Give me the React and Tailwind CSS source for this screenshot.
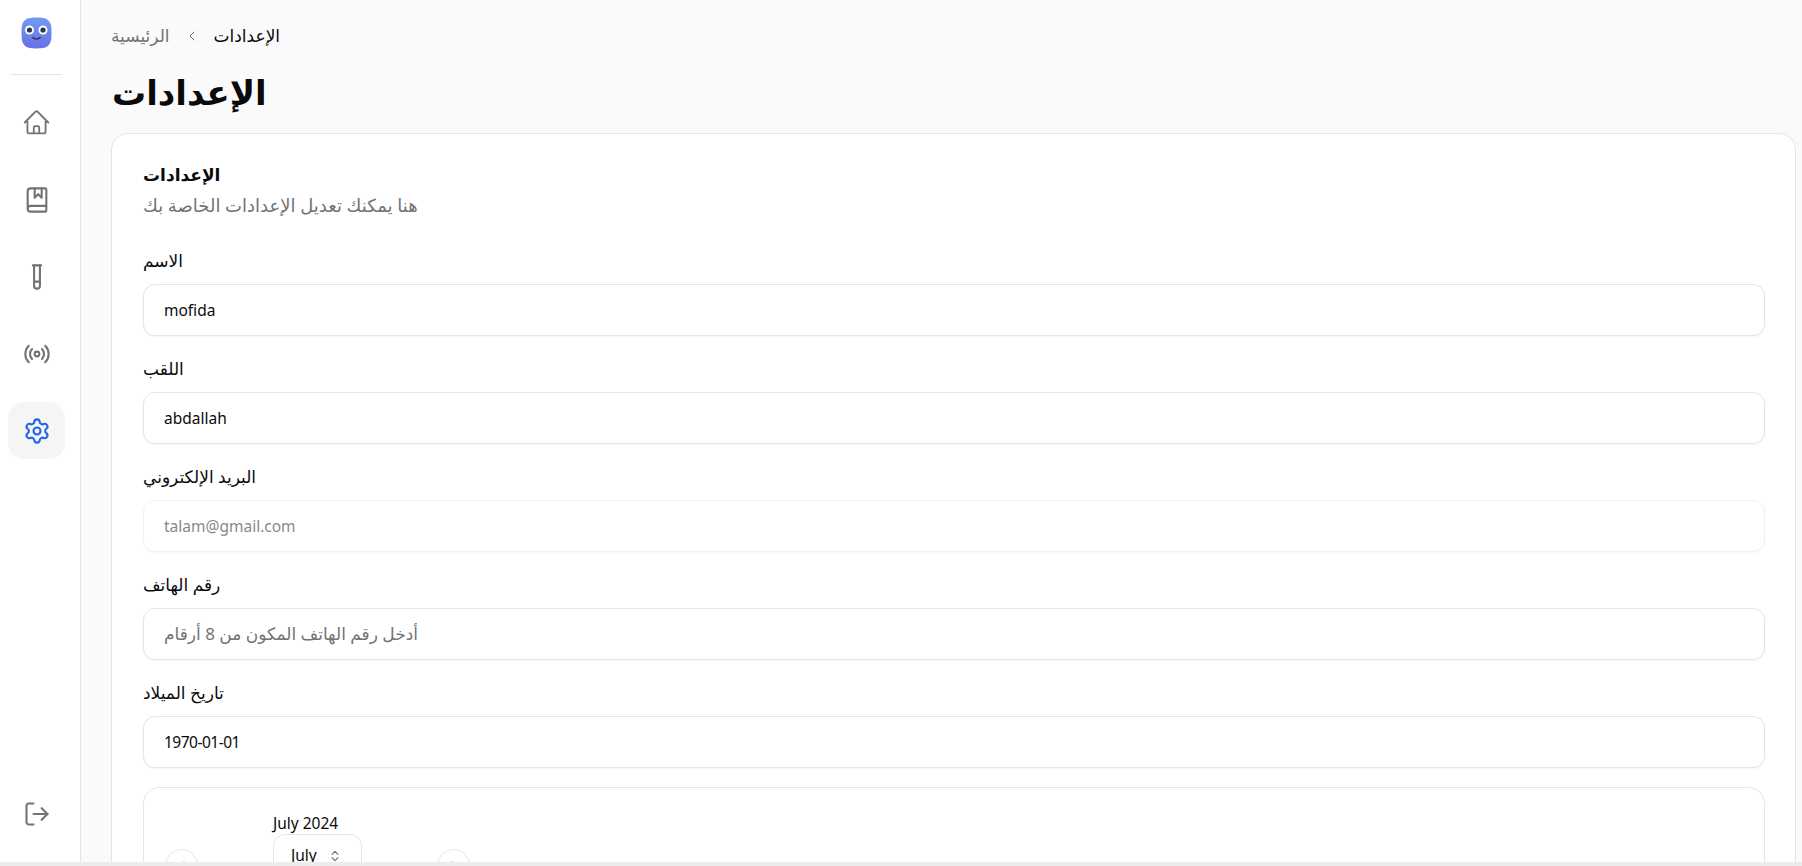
import { LogOut, Radio, Settings, TestTube, BookMarked, ChevronLeft, ChevronRight, ChevronsUpDown } from 'lucide-react';
import { HiOutlineHome } from 'react-icons/hi2';

function Logo() {
  return (
    <svg width="31" height="32" viewBox="0 0 31 32">
      <defs>
        <linearGradient id="face" x1="0" y1="0" x2="0" y2="1">
          <stop offset="0" stopColor="#6f9bf5" />
          <stop offset="1" stopColor="#6a6fe6" />
        </linearGradient>
      </defs>
      <path d="M15.5 0.5C25 0.5 30.5 2 30.5 14V18C30.5 29 26 31.5 15.5 31.5C5 31.5 0.5 29 0.5 18V14C0.5 2 6 0.5 15.5 0.5Z" fill="url(#face)" />
      <circle cx="8.5" cy="13" r="4.5" fill="#fff" />
      <circle cx="22" cy="13" r="4.5" fill="#fff" />
      <circle cx="8.5" cy="13" r="2.6" fill="#2f3450" />
      <circle cx="22" cy="13" r="2.6" fill="#2f3450" />
      <path d="M12 20.5C13.5 22.5 17.5 22.5 19 20.5" stroke="#2f3450" strokeWidth="1.6" fill="none" strokeLinecap="round" />
    </svg>
  );
}

function NavItem({ children, active }) {
  return (
    <div className={active ? 'w-[57px] h-[57px] mx-auto rounded-2xl bg-[#f5f5f5] flex items-center justify-center text-[#2563eb]' : 'w-[57px] h-[57px] mx-auto flex items-center justify-center text-[#737373]'}>
      {children}
    </div>
  );
}

function Field({ label, value, placeholder, disabled, tight }) {
  const base = 'h-[52px] w-full rounded-xl border border-[#e5e5e5] bg-white px-5 text-[15.5px] text-[#0a0a0a] shadow-xs outline-none';
  return (
    <div className="flex flex-col">
      <label className="text-[17px] leading-[20px] text-[#0a0a0a] h-[20px] mb-[13px]">{label}</label>
      <input
        readOnly
        defaultValue={value}
        placeholder={placeholder}
        disabled={disabled}
        className={`${base} ${disabled ? 'opacity-50' : 'placeholder:text-[17px] placeholder:text-[#737373]'} ${tight ? 'tracking-[-0.5px]' : ''}`}
      />
    </div>
  );
}

export default function App() {
  return (
    <div className="h-screen flex flex-col overflow-hidden bg-[#fafafa] font-['Noto_Sans','DejaVu_Sans',sans-serif]">
      <div className="flex flex-1 min-h-0">
        <aside className="w-[81px] shrink-0 bg-white border-r border-[#e5e5e5] pr-[7px] flex flex-col">
          <div className="h-[75px] mx-[11px] border-b border-[#e5e5e5] flex justify-center pt-[17px]">
            <Logo />
          </div>
          <div className="flex flex-col gap-5 pt-[19px]">
            <NavItem><HiOutlineHome size={29} /></NavItem>
            <NavItem><BookMarked size={28} strokeWidth={1.8} /></NavItem>
            <NavItem><TestTube size={28} strokeWidth={1.8} /></NavItem>
            <NavItem><Radio size={28} strokeWidth={1.8} /></NavItem>
            <NavItem active><Settings size={28} strokeWidth={1.8} /></NavItem>
          </div>
          <div className="mt-auto pb-[20px]">
            <NavItem><LogOut size={28} strokeWidth={1.8} /></NavItem>
          </div>
        </aside>

        <main className="flex-1 min-w-0 overflow-hidden pl-[30px] pr-[6px]">
          <nav className="flex items-center h-[20px] mt-[26px] text-[17px] text-[#737373]">
            <span>الرئيسية</span>
            <ChevronLeft size={16} strokeWidth={1.5} className="mx-[14px]" />
            <span className="text-[#0a0a0a]">الإعدادات</span>
          </nav>
          <h1 className="mt-[22px] ml-[1px] h-[54px] text-[34px] leading-[48px] font-bold text-[#0a0a0a]">الإعدادات</h1>

          <section className="mt-[11px] rounded-2xl border border-[#e5e5e5] bg-white pt-[29px] pl-[31px] pr-[30px]">
            <h2 className="text-[17px] leading-[24px] font-bold text-[#0a0a0a]">الإعدادات</h2>
            <p className="mt-[8px] text-[18px] leading-[20px] text-[#737373]">هنا يمكنك تعديل الإعدادات الخاصة بك</p>

            <div className="mt-[36px] flex flex-col gap-[23px]">
              <Field label="الاسم" value="mofida" />
              <Field label="اللقب" value="abdallah" />
              <Field label="البريد الإلكتروني" value="talam@gmail.com" disabled />
              <Field label="رقم الهاتف" placeholder="أدخل رقم الهاتف المكون من 8 أرقام" />
              <Field label="تاريخ الميلاد" value="1970-01-01" tight />
            </div>

            <div className="mt-[19px] h-[300px] rounded-2xl border border-[#e5e5e5] flex items-start pl-[21px] pt-[26px]">
              <button className="mt-[35px] w-[33px] h-[33px] rounded-full border border-[#e5e5e5] flex items-center justify-center text-[#a3a3a3]">
                <ChevronLeft size={16} />
              </button>
              <div className="ml-[75px] w-[164px] flex flex-col">
                <div className="text-[15.5px] leading-[18px] text-[#0a0a0a]">July 2024</div>
                <div className="mt-[2px] w-[89px] h-[44px] rounded-xl border border-[#e5e5e5] flex items-center justify-between pl-[17px] pr-[19px] text-[15.5px] text-[#0a0a0a]">
                  <span>July</span>
                  <ChevronsUpDown size={14} className="text-[#737373]" />
                </div>
              </div>
              <button className="mt-[35px] w-[33px] h-[33px] rounded-full border border-[#e5e5e5] flex items-center justify-center text-[#a3a3a3]">
                <ChevronRight size={16} />
              </button>
            </div>
          </section>
        </main>
      </div>
      <div className="h-[4px] shrink-0 bg-[#ececec]" />
    </div>
  );
}
